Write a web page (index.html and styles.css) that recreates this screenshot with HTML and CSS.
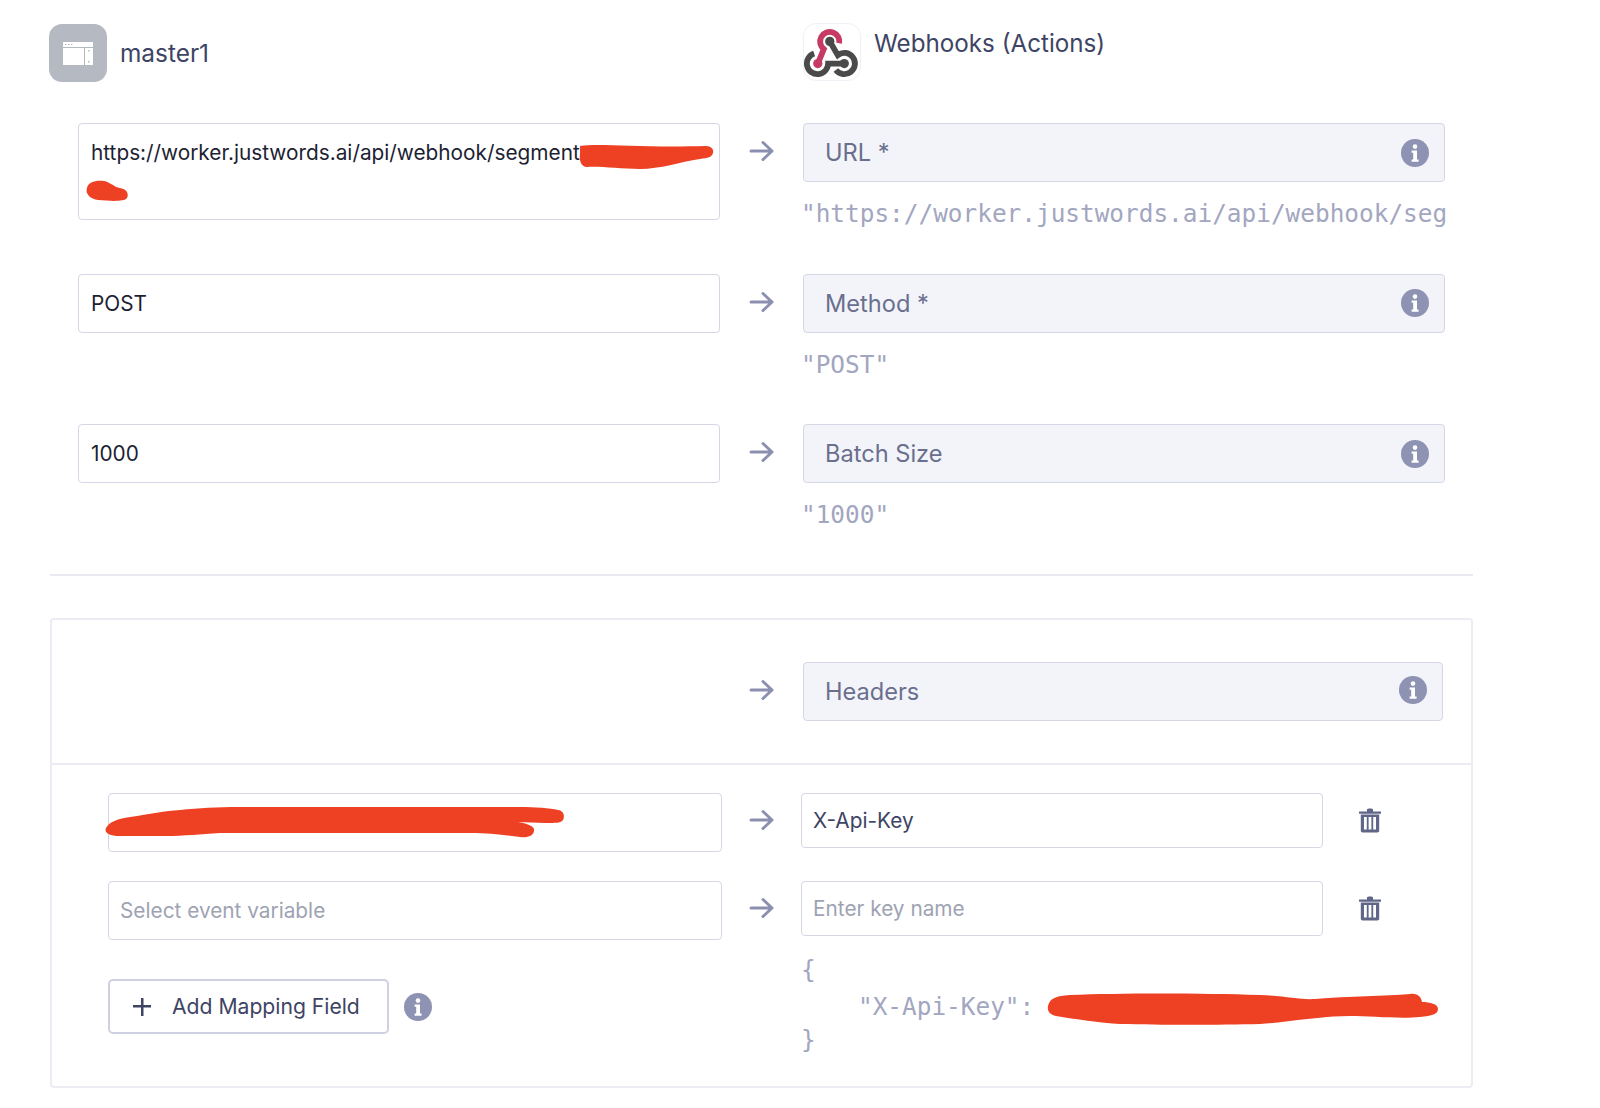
FILE: index.html
```html
<!DOCTYPE html>
<html lang="en">
<head>
<meta charset="utf-8">
<title>Webhook mappings</title>
<link rel="stylesheet" href="styles.css">
</head>
<body>
<svg class="defs" width="0" height="0" aria-hidden="true">
  <symbol id="info" viewBox="0 0 28 28">
    <circle cx="14" cy="14" r="14" fill="#8e92b3"/>
    <circle cx="14" cy="7.6" r="2.3" fill="#fff"/>
    <path d="M10.6 11.4h5.4v9h1.6v2.4h-7v-2.4h1.6v-6.6h-1.6z" fill="#fff"/>
  </symbol>
  <symbol id="arrow" viewBox="0 0 26 22">
    <path d="M2 11h21M14 2.500l9 8.500-9 8.500" fill="none" stroke="#8b90b1" stroke-width="3" stroke-linecap="round" stroke-linejoin="round"/>
  </symbol>
  <symbol id="trash" viewBox="0 0 24 26">
    <path d="M1 4.500h22v2.300H1zM9 2.500c0-1.200 6-1.200 6 0v2H9z" fill="#5f6688"/>
    <path fill-rule="evenodd" d="M2.800 7.500h18.400v16.300c0 1-.8 1.700-1.700 1.700H4.500c-.9 0-1.700-.7-1.700-1.700zM6 10v12.500h2.800V10zM10.600 10v12.500h2.800V10zM15.200 10v12.500H18V10z" fill="#5f6688"/>
  </symbol>
</svg>

<main class="page">
  <header class="sources">
    <div class="source source-left">
      <span class="logo logo-master">
        <svg width="30" height="23" viewBox="0 0 30 23">
          <path fill="#fff" d="M0 0h30v23H0z"/>
          <path fill="#b4b9c2" d="M0 5h30v1H0zM21 6h1v17h-1zM2 2h1.500v1H2zM5 2h1.500v1H5zM8 2h1.500v1H8zM25 8h1.500v1.500H25zM25 19h1.500v1.500H25z"/>
        </svg>
      </span>
      <span class="source-name">master1</span>
    </div>
    <div class="source source-right">
      <span class="logo logo-hook">
        <svg width="58" height="58" viewBox="0 0 58 58">
          <path d="M10.500 30.500A11 11 0 1 0 25 41H41.700" fill="none" stroke="#4a4a4a" stroke-width="6"/>
          <path d="M26.700 18L35 32.200A11 11 0 1 1 33 47.600" fill="none" stroke="#4a4a4a" stroke-width="6"/>
          <path d="M14.300 41L20.500 26A10 10 0 1 1 36.500 20" fill="none" stroke="#c73a63" stroke-width="6"/>
          <circle cx="26.700" cy="18" r="4.800" fill="#4a4a4a"/>
          <circle cx="41.700" cy="41" r="4.800" fill="#4a4a4a"/>
          <circle cx="14.300" cy="41" r="4.800" fill="#c73a63"/>
        </svg>
      </span>
      <span class="source-name source-name-top">Webhooks (Actions)</span>
    </div>
  </header>

  <section class="fields">
    <div class="field-row">
      <div class="box box-tall">https://worker.justwords.ai/api/webhook/segment
        <svg class="scribble scribble-url" width="135" height="28" viewBox="579 143 135 28"><path fill="#ee4023" d="M580 146C600 143 640 148 706 146C712 146 714 150 713 153C712 157 708 158 700 159C680 162 660 169 640 169C620 169 600 166 587 167C581 167 579 160 580 154Z"/></svg>
        <svg class="scribble scribble-dot" width="43" height="23" viewBox="86 180 43 23"><path fill="#ee4023" d="M87 188C88 182 96 180 104 181C110 182 114 187 120 188C127 189 129 194 127 198C124 202 110 201 98 200C90 199 85 194 87 188Z"/></svg>
      </div>
      <svg class="arrow"><use href="#arrow"/></svg>
      <div class="target">
        <div class="box box-filled"><span>URL *</span><svg class="info"><use href="#info"/></svg></div>
        <p class="note">"https://worker.justwords.ai/api/webhook/seg</p>
      </div>
    </div>

    <div class="field-row">
      <div class="box">POST</div>
      <svg class="arrow"><use href="#arrow"/></svg>
      <div class="target">
        <div class="box box-filled"><span>Method *</span><svg class="info"><use href="#info"/></svg></div>
        <p class="note">"POST"</p>
      </div>
    </div>

    <div class="field-row">
      <div class="box">1000</div>
      <svg class="arrow"><use href="#arrow"/></svg>
      <div class="target">
        <div class="box box-filled"><span>Batch Size</span><svg class="info"><use href="#info"/></svg></div>
        <p class="note">"1000"</p>
      </div>
    </div>
  </section>

  <hr class="rule">

  <section class="card">
    <div class="card-head">
      <svg class="arrow"><use href="#arrow"/></svg>
      <div class="box box-filled"><span>Headers</span><svg class="info"><use href="#info"/></svg></div>
    </div>
    <div class="card-body">
      <div class="map-row">
        <div class="box box-small">
          <svg class="scribble scribble-key" width="459" height="32" viewBox="105 806 459 32"><path fill="#ee4023" d="M106 828C110 821 118 819 130 817C150 814 165 811 180 810C200 808 215 807 240 807L520 807C535 807 550 808 558 810C564 811 565 816 563 820C561 823 556 823 545 823L518 822C530 824 535 827 534 831C533 836 528 838 520 837C505 835 490 833 470 833L220 833C200 834 185 836 165 836L120 836C108 836 104 832 106 828Z"/></svg>
        </div>
        <svg class="arrow"><use href="#arrow"/></svg>
        <div class="box box-small box-short">X-Api-Key</div>
        <svg class="trash"><use href="#trash"/></svg>
      </div>
      <div class="map-row">
        <div class="box box-small placeholder">Select event variable</div>
        <svg class="arrow"><use href="#arrow"/></svg>
        <div class="box box-small box-short placeholder">Enter key name</div>
        <svg class="trash"><use href="#trash"/></svg>
      </div>
      <div class="map-foot">
        <div class="add-group">
          <button class="add-btn" type="button"><span class="plus"></span>Add Mapping Field</button>
          <svg class="info"><use href="#info"/></svg>
        </div>
        <div class="json">
          <div class="json-line json-open">{</div>
          <div class="json-line json-key">"X-Api-Key":</div>
          <div class="json-line">}</div>
          <svg class="scribble scribble-json" width="392" height="32" viewBox="1047 993 392 32"><path fill="#ee4023" d="M1048 1006C1050 998 1056 996 1070 995C1120 993 1200 993 1260 995C1285 996 1300 1000 1315 999C1350 996 1385 996 1410 994C1418 993 1421 997 1422 1002C1430 1002 1438 1004 1438 1009C1438 1014 1432 1016 1420 1017C1400 1019 1370 1016 1350 1016C1320 1016 1290 1022 1260 1024C1220 1025 1160 1025 1120 1024C1100 1023 1075 1019 1056 1016C1050 1015 1047 1011 1048 1006Z"/></svg>
        </div>
      </div>
    </div>
  </section>
</main>
</body>
</html>
```

FILE: styles.css
```css
* { box-sizing: border-box; }

html, body {
  margin: 0;
  padding: 0;
  background: #fff;
}

body {
  font-family: Inter, "Liberation Sans", sans-serif;
  color: #1d1f33;
  overflow: hidden;
}

.defs { position: absolute; }

.page {
  width: 1424px;
  margin-left: 49px;
  padding-top: 23px;
}

.sources {
  display: grid;
  grid-template-columns: 754px 1fr;
  height: 59px;
}

.source {
  display: flex;
  align-items: center;
  gap: 13px;
}

.source-right { align-items: flex-start; }

.logo {
  flex: none;
  display: flex;
  align-items: center;
  justify-content: center;
  width: 58px;
  height: 58px;
  border-radius: 13px;
}

.logo-master {
  background: #b4b9c2;
  margin-top: 1px;
}

.logo-hook {
  border: 1px solid #eff0f6;
}

.source-name {
  font-size: 24.400px;
  line-height: 58px;
  color: #3e4464;
}

.source-name-top {
  font-size: 24.200px;
  line-height: 41px;
}

.fields {
  display: flex;
  flex-direction: column;
  gap: 44.500px;
  margin-top: 41px;
  padding-left: 29px;
}

.field-row {
  display: grid;
  grid-template-columns: 642px 83px 642px;
  align-items: start;
}

.arrow {
  width: 26px;
  height: 22px;
  margin: 17px 0 0 29px;
}

.box {
  position: relative;
  display: flex;
  align-items: center;
  height: 59px;
  padding: 0 12px;
  border: 1.500px solid #d5d6e6;
  border-radius: 4px;
  font-size: 20.800px;
  color: #1d1f33;
  white-space: nowrap;
}

.box-tall {
  height: 97px;
  align-items: flex-start;
  padding-top: 13px;
  line-height: 32px;
}

.box-filled {
  justify-content: space-between;
  padding: 0 15px 0 21px;
  background: #f3f4f9;
  font-size: 23.600px;
  color: #6a6f8e;
}

.info {
  flex: none;
  width: 28px;
  height: 28px;
}

.note {
  margin: 17px 0 0 -2px;
  font-family: "DejaVu Sans Mono", monospace;
  font-size: 24.400px;
  line-height: 30px;
  color: #a2a6bf;
  white-space: nowrap;
}

.rule {
  height: 2px;
  margin: 44px 0 0 1px;
  border: 0;
  background: #e9eaf1;
}

.card {
  margin: 42px 0 0 1px;
  height: 470px;
  border: 2px solid #ecedf4;
  border-radius: 4px;
}

.card-head {
  display: grid;
  grid-template-columns: 83px 640px;
  justify-content: start;
  align-items: center;
  padding: 42px 0 42px 668px;
  border-bottom: 2px solid #ecedf4;
}

.card-head .arrow { margin-top: -4px; }

.card-head .info { margin-top: -4px; }

.card-body {
  display: flex;
  flex-direction: column;
  gap: 29px;
  padding: 28px 0 0 56px;
}

.map-row {
  display: grid;
  grid-template-columns: 614px 79px 522px 94px;
  align-items: start;
}

.map-row .arrow { margin: 16px 0 0 27px; }

.box-small {
  padding-left: 11px;
}

.box-short {
  height: 55px;
  color: #3e4464;
}

.placeholder { color: #9ea3b3; }

.trash {
  width: 24px;
  height: 26px;
  margin: 14px 0 0 35px;
}

.map-foot {
  display: grid;
  grid-template-columns: 693px 1fr;
  margin-top: -17px;
}

.add-group {
  display: flex;
  align-items: center;
  gap: 15px;
  height: 55px;
  margin-top: 27px;
}

.add-btn {
  display: flex;
  align-items: center;
  gap: 21px;
  width: 281px;
  height: 55px;
  padding: 0 0 0 23px;
  background: #fff;
  border: 2px solid #cfd1e2;
  border-radius: 5px;
  font-family: Inter, "Liberation Sans", sans-serif;
  font-size: 21.150px;
  color: #3e4464;
}

.plus {
  width: 18px;
  height: 18px;
  background:
    linear-gradient(#3e4464, #3e4464) center / 18px 2.500px no-repeat,
    linear-gradient(#3e4464, #3e4464) center / 2.500px 18px no-repeat;
}

.json {
  position: relative;
  font-family: "DejaVu Sans Mono", monospace;
  font-size: 24.400px;
  line-height: 35px;
  color: #a2a6bf;
}

.json-open { margin-bottom: 2px; }

.json-key {
  margin-bottom: -2px;
  padding-left: 57px;
}

.scribble { position: absolute; }

.scribble-url { left: 500px; top: 19px; }
.scribble-dot { left: 7px; top: 56px; }
.scribble-key { left: -4px; top: 12px; }
.scribble-json { left: 246px; top: 41px; }
```
